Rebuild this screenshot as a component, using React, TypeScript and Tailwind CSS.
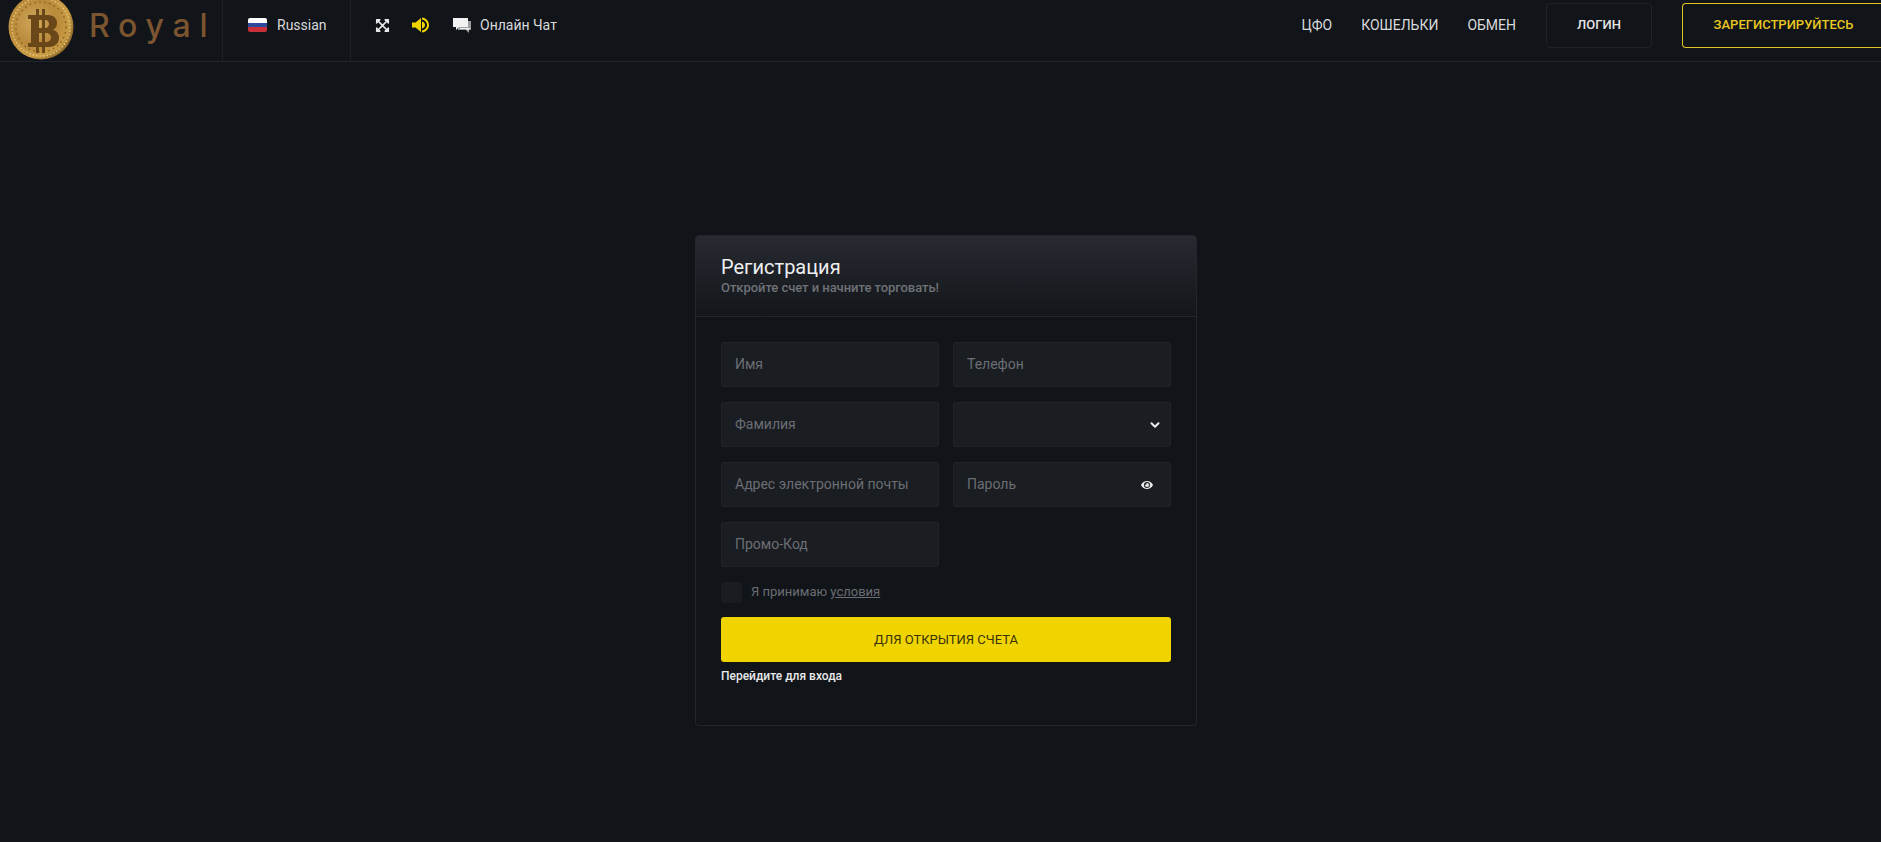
import { ChevronDown } from "lucide-react"
import { FaExpandArrowsAlt, FaEye } from "react-icons/fa"

const font = { fontFamily: "Roboto, sans-serif" }

function Coin() {
  return (
    <svg viewBox="0 0 66 66" className="w-[66px] h-[66px] shrink-0 mt-[2px]">
      <defs>
        <radialGradient id="coin" cx="40%" cy="42%" r="65%">
          <stop offset="0%" stopColor="#cfa75c" />
          <stop offset="55%" stopColor="#b98a3a" />
          <stop offset="82%" stopColor="#c99c45" />
          <stop offset="100%" stopColor="#7a5620" />
        </radialGradient>
      </defs>
      <circle cx="33" cy="33" r="32.5" fill="url(#coin)" />
      <circle cx="33" cy="33" r="29" fill="none" stroke="#e6c47a" strokeWidth="1.5" strokeDasharray="1.5 2" />
      <circle cx="33" cy="33" r="25" fill="none" stroke="#946c2a" strokeWidth="1.5" strokeDasharray="2 3" />
      <g fill="#6a4719">
        <rect x="28" y="15" width="3" height="44" />
        <rect x="34" y="15" width="3" height="44" />
        <path fillRule="evenodd" d="M20 21h20c6 0 9 4 9 8 0 3-1 5-4 7 4 1 6 4 6 8 0 6-5 9-10 9H20v-4h3V25h-3zM30 26v8h7c3 0 4-2 4-4s-1-4-4-4zM30 39v9h8c3 0 5-2 5-4.500s-2-4.500-5-4.500z" />
      </g>
    </svg>
  )
}

function Volume() {
  return (
    <svg viewBox="0 0 18 16" className="w-[18px] h-[16px] ml-[22px]" fill="#f0d400">
      <path d="M0 5.500h3.500L9 1v14l-5.500-4.500H0z" />
      <path d="M10 .5c4 .5 7 3.500 7 7.500s-3 7-7 7.500v-2c2.800-.5 5-2.800 5-5.500s-2.200-5-5-5.500z" />
      <path d="M10 4.500c1.800.4 3 1.800 3 3.500s-1.200 3.100-3 3.500z" />
    </svg>
  )
}

function Chat() {
  return (
    <svg viewBox="0 0 18 16" className="w-[18px] h-[16px] ml-[23px]">
      <path fill="#9a9b9e" d="M5 4h13v9h-2v3l-3-3H5z" />
      <path fill="#f2f2f3" d="M0 1h15v9H6l-3 3v-3H0z" />
      <path fill="#f2f2f3" d="M7 11h10v1h-1.500v2L13 12H7z" />
    </svg>
  )
}

function Field({ placeholder, children }: { placeholder?: string; children?: React.ReactNode }) {
  return (
    <div className="h-[45px] flex items-center justify-between bg-[#1a1d22] border border-[#20232a] rounded-[2px] pl-[13px] pr-[13px]">
      <span className="text-[14px] text-[#6b6e74]">{placeholder}</span>
      {children}
    </div>
  )
}

export default function App() {
  return (
    <div className="min-h-[842px] bg-[#111419] overflow-hidden" style={font}>
      <header className="h-[62px] flex items-center border-b border-[#22252b] overflow-hidden">
        <div className="w-[223px] h-full flex items-center border-r border-[#1d2026] pl-[8px] pb-[9px]">
          <Coin />
          <span className="ml-[15px] text-[#7c5530] text-[32px] font-medium tracking-[8.8px]" style={{ fontFamily: "Inter, sans-serif" }}>
            Royal
          </span>
        </div>
        <div className="w-[128px] h-full flex items-center border-r border-[#1d2026] pl-[25px] pb-[11px]">
          <div className="w-[19px] h-[14px] flex flex-col rounded-[2px] overflow-hidden">
            <div className="flex-1 bg-white" />
            <div className="flex-1 bg-[#2b4a9b]" />
            <div className="flex-1 bg-[#c9303a]" />
          </div>
          <span className="ml-[10px] text-[14px] text-[#d8d9db]">Russian</span>
        </div>
        <div className="h-full flex items-center pl-[24px] pb-[11px]">
          <FaExpandArrowsAlt className="text-[#e8e9ea] text-[15px]" />
          <Volume />
          <Chat />
          <span className="ml-[9px] text-[14px] text-[#d8d9db]">Онлайн Чат</span>
        </div>
        <div className="ml-auto h-full flex items-center pb-[11px] text-[14px] text-[#d8d9db]">
          <span className="mr-[29px]">ЦФО</span>
          <span className="mr-[29px]">КОШЕЛЬКИ</span>
          <span className="mr-[30px]">ОБМЕН</span>
          <button className="w-[106px] h-[45px] border border-[#1f2228] rounded-[4px] text-[13px] font-medium text-[#e4e5e6] mr-[30px]">
            ЛОГИН
          </button>
          <button className="w-[202px] h-[45px] border border-[#e0c423] rounded-l-[4px] border-r-0 text-[13px] font-medium text-[#e8c822] -mr-[3px]">
            ЗАРЕГИСТРИРУЙТЕСЬ
          </button>
        </div>
      </header>

      <main className="flex justify-center pt-[173px]">
        <div className="w-[502px] h-[491px] border border-[#23262c] rounded-[4px] overflow-hidden ml-[11px]">
          <div className="h-[81px] border-b border-[#23262c] bg-gradient-to-b from-[#272a30] to-[#13161b] px-[25px] pt-[19px]">
            <h1 className="text-[20px] leading-[24px] text-[#eeeff0]">Регистрация</h1>
            <p className="text-[13px] leading-[16px] mt-[1px] font-medium tracking-[-0.05px] text-[#6f7277]">Откройте счет и начните торговать!</p>
          </div>
          <div className="px-[25px] pt-[25px]">
            <div className="grid grid-cols-2 gap-x-[14px] gap-y-[15px]">
              <Field placeholder="Имя" />
              <Field placeholder="Телефон" />
              <Field placeholder="Фамилия" />
              <Field>
                <ChevronDown size={14} strokeWidth={3.5} className="text-[#e8e9ea] -mr-[5px]" />
              </Field>
              <Field placeholder="Адрес электронной почты" />
              <Field placeholder="Пароль">
                <FaEye className="text-[#e8e9ea] text-[12px] mr-[4px]" />
              </Field>
              <Field placeholder="Промо-Код" />
            </div>
            <div className="flex items-center mt-[15px] h-[20px]">
              <div className="w-[21px] h-[21px] bg-[#191c21] rounded-[3px]" />
              <span className="ml-[9px] text-[13px] text-[#6b6e74]">
                Я принимаю <span className="underline">условия</span>
              </span>
            </div>
            <button className="block w-full h-[45px] mt-[15px] bg-[#f0d400] rounded-[3px] text-[13px] text-[#3a3208]">
              ДЛЯ ОТКРЫТИЯ СЧЕТА
            </button>
            <div className="mt-[5px] text-[12px] font-medium text-[#e8e9ea]">Перейдите для входа</div>
          </div>
        </div>
      </main>
    </div>
  )
}
